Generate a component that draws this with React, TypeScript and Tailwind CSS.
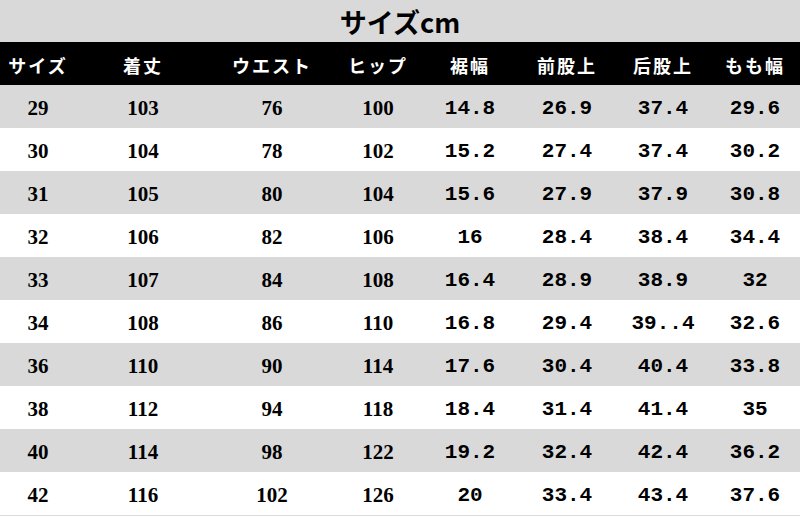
import React from 'react';

const headers = ['サイズ', '着丈', 'ウエスト', 'ヒップ', '裾幅', '前股上', '后股上', 'もも幅'];

const rows: string[][] = [
  ['29', '103', '76', '100', '14.8', '26.9', '37.4', '29.6'],
  ['30', '104', '78', '102', '15.2', '27.4', '37.4', '30.2'],
  ['31', '105', '80', '104', '15.6', '27.9', '37.9', '30.8'],
  ['32', '106', '82', '106', '16', '28.4', '38.4', '34.4'],
  ['33', '107', '84', '108', '16.4', '28.9', '38.9', '32'],
  ['34', '108', '86', '110', '16.8', '29.4', '39..4', '32.6'],
  ['36', '110', '90', '114', '17.6', '30.4', '40.4', '33.8'],
  ['38', '112', '94', '118', '18.4', '31.4', '41.4', '35'],
  ['40', '114', '98', '122', '19.2', '32.4', '42.4', '36.2'],
  ['42', '116', '102', '126', '20', '33.4', '43.4', '37.6'],
];

const cols = 'grid grid-cols-[76px_134px_124px_88px_96px_98px_94px_90px]';

const App: React.FC = () => {
  return (
    <div className="w-[800px] h-[518px] bg-white overflow-hidden">
      <div className="h-[42px] bg-[#d9d9d9] flex items-center justify-center text-[27px] font-bold text-black leading-none font-['Noto_Sans_CJK_JP',sans-serif]">
        サイズcm
      </div>

      <div className={`${cols} h-[43px] pt-[3px] bg-black items-center text-white font-bold text-[18px] tracking-[2px] font-['Noto_Sans_CJK_JP',sans-serif]`}>
        {headers.map((h) => (
          <div key={h} className="text-center">{h}</div>
        ))}
      </div>

      {rows.map((r, i) => (
        <div
          key={r[0]}
          className={`${cols} h-[43px] pt-[4px] items-center text-black font-bold ${i % 2 === 0 ? 'bg-[#d9d9d9]' : 'bg-white'}`}
        >
          {r.map((v, j) => (
            <div
              key={j}
              className={
                j < 4
                  ? "text-center text-[21px] font-['Liberation_Serif',serif]"
                  : "text-center text-[21px] font-['Liberation_Mono',monospace]"
              }
            >
              {v}
            </div>
          ))}
        </div>
      ))}
      <div className="h-px bg-[#d9d9d9]" />
    </div>
  );
};

export default App;
